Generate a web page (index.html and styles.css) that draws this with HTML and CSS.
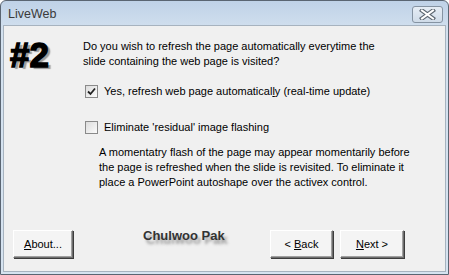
FILE: index.html
```html
<!doctype html>
<html lang="en">
<head>
	<meta charset="UTF-8" />
	<title>LiveWeb</title>
<link rel="stylesheet" href="styles.css">
</head>
<body>
	<section class="window">
		<header class="titlebar">
			<span class="title">LiveWeb</span>
			<a href="javascript:;" class="close">
				<svg width="17" height="11" viewBox="0 0 17 11">
					<path d="M3 1.5 L14 9.5 M14 1.5 L3 9.5" stroke="#5c6670" stroke-width="4.2" stroke-linecap="square"/>
					<path d="M3 1.5 L14 9.5 M14 1.5 L3 9.5" stroke="#fff" stroke-width="2" stroke-linecap="square"/>
				</svg>
			</a>
		</header>
		<div class="client">
			<div class="top">
				<div class="step">#2</div>
				<div class="main">
					<p class="question">Do you wish to refresh the page automatically everytime the<br>slide containing the web page is visited?</p>
					<label class="check first"><span class="box on"><svg width="9" height="9" viewBox="0 0 9 9"><path d="M1 4.5 L3.5 7 L8 1.5" fill="none" stroke="#222" stroke-width="1.8"/></svg></span><span>Yes, refresh web page automatical<u>l</u>y (real-time update)</span></label>
					<label class="check second"><span class="box"></span><span>Eliminate 'residual' image flashing</span></label>
					<p class="note">A momentatry flash of the page may appear momentarily before<br>the page is refreshed when the slide is revisited. To eliminate it<br>place a PowerPoint autoshape over the activex control.</p>
				</div>
			</div>
			<div class="footer">
				<a href="javascript:;" class="btn"><span><u>A</u>bout...</span></a>
				<span class="author">Chulwoo Pak</span>
				<a href="javascript:;" class="btn back"><span>&lt; <u>B</u>ack</span></a>
				<a href="javascript:;" class="btn"><span><u>N</u>ext &gt;</span></a>
			</div>
		</div>
	</section>
</body>
</html>
```
FILE: styles.css
```css
*{
	margin: 0;
	padding: 0;
}
body{
	background: #fff;
	font-family: "Liberation Sans", Arial, sans-serif;
	font-size: 11px;
	color: #000;
}
.window{
	width: 449px;
	height: 275px;
	box-sizing: border-box;
	border: 1px solid #5a6572;
	border-radius: 6px 6px 0 0;
	background: linear-gradient(#bfd2e7, #d3e1ef 30px, #d6e3f0);
	display: flex;
	flex-direction: column;
}
.titlebar{
	height: 24px;
	display: flex;
	align-items: center;
	padding: 0 5px 0 7px;
}
.title{
	flex: 1;
	font-size: 12.5px;
	color: #3a3a3a;
	padding-top: 1px;
}
.close{
	width: 29px;
	height: 15px;
	border: 1px solid #8593a2;
	border-radius: 3px;
	background: linear-gradient(#e6edf5, #cfdbe8);
	display: flex;
	align-items: center;
	justify-content: center;
	margin-top: 2px;
}
.client{
	flex: 1;
	margin: 0 2px 2px;
	border: 1px solid #a7b3bf;
	background: #f0f0f0;
	display: flex;
	flex-direction: column;
}
.top{
	display: flex;
	padding-top: 13px;
}
.step{
	flex: none;
	width: 73px;
	padding-left: 6px;
	font-weight: bold;
	font-size: 35px;
	line-height: 30px;
	margin-top: 1px;
	-webkit-text-stroke: 1.4px #000;
	text-shadow: 3px 2px 1px #9a9a9a;
}
.main{
	flex: 1;
	min-width: 0;
	line-height: 15px;
	white-space: nowrap;
}
.check{
	display: flex;
	align-items: center;
	height: 15px;
}
.check.first{
	margin-top: 15px;
}
.check.second{
	margin-top: 21px;
}
.box{
	width: 11px;
	height: 11px;
	border: 1px solid #8a8a8a;
	background: linear-gradient(135deg, #dcdcdc, #fbfbfb);
	margin: 0 6px 0 2px;
	display: flex;
	align-items: center;
	justify-content: center;
}
u{
	text-decoration: underline;
}
.note{
	margin: 10px 0 0 16px;
}
.footer{
	margin-top: auto;
	display: flex;
	padding: 0 41px 13px 9px;
}
.btn{
	width: 58px;
	height: 26px;
	border: 1px solid;
	border-color: #fff #6e6e6e #6e6e6e #fff;
	box-shadow: inset -1px -1px 0 #a0a0a0, 1px 1px 0 #3c3c3c;
	background: #f4f4f4;
	display: flex;
	align-items: center;
	justify-content: center;
	color: #000;
	text-decoration: none;
}
.author{
	margin: -2px 0 0 70px;
	align-self: flex-start;
	font-weight: bold;
	font-size: 13px;
	color: #333;
	text-shadow: 3px 4px 3px #999;
	flex: 1;
}
.btn.back{
	width: 61px;
	margin-right: 7px;
}
.btn:last-child{
	width: 62px;
}
```
